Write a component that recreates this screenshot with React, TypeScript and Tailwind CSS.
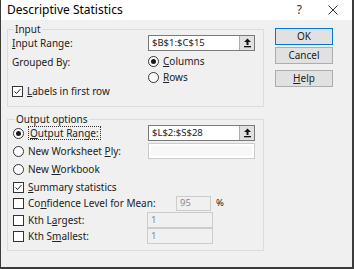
import React from "react";

const font = { fontFamily: '"Noto Sans", "Open Sans", sans-serif' };

function Radio({ checked }: { checked?: boolean }) {
  return (
    <span className="w-[11px] h-[11px] rounded-full border border-[#333333] bg-white flex items-center justify-center shrink-0">
      {checked && <span className="w-[5px] h-[5px] rounded-full bg-[#1a1a1a]" />}
    </span>
  );
}

function Check({ checked }: { checked?: boolean }) {
  return (
    <span className="w-[11px] h-[11px] border border-[#333333] bg-white flex items-center justify-center shrink-0">
      {checked && (
        <svg width="9" height="9" viewBox="0 0 9 9">
          <path d="M1.5 4.5 L3.5 6.5 L7.5 2" stroke="#222" strokeWidth="1" fill="none" />
        </svg>
      )}
    </span>
  );
}

function UpBtn() {
  return (
    <span className="w-[15px] h-full bg-[#e1e1e1] border-l border-[#adadad] flex items-center justify-center">
      <svg width="9" height="10" viewBox="0 0 9 10">
        <path d="M4.5 0.5 L8 4 L5.5 4 L5.5 7 L3.5 7 L3.5 4 L1 4 Z" fill="#111" />
        <rect x="1" y="8" width="7" height="1.3" fill="#111" />
      </svg>
    </span>
  );
}

function Btn({ children, primary }: { children: React.ReactNode; primary?: boolean }) {
  return (
    <div
      className={`w-[58px] h-[17px] bg-[#e1e1e1] border flex items-center justify-center text-[10px] text-[#222] ${
        primary ? "border-[#0078d7]" : "border-[#adadad]"
      }`}
    >
      {children}
    </div>
  );
}

export default function App() {
  return (
    <div
      className="w-[354px] h-[269px] bg-[#f0f0f0] border-l border-r-2 border-b-2 border-[#3c3c3c] flex flex-col text-[10px] text-[#222] overflow-hidden"
      style={font}
    >
      <div className="h-[20px] bg-white flex items-center shrink-0">
        <span className="pl-[6px] text-[12px] text-black leading-none">Descriptive Statistics</span>
        <span className="ml-auto text-[12px] leading-none mr-[26px] text-[#333]">?</span>
        <span className="mr-[14px] leading-none">
          <svg width="10" height="10" viewBox="0 0 10 10">
            <path d="M0.5 0.5 L9.5 9.5 M9.5 0.5 L0.5 9.5" stroke="#333" strokeWidth="1" />
          </svg>
        </span>
      </div>
      <div className="flex flex-1">
        <div className="ml-[6px] w-[257px] flex flex-col">
          <fieldset className="mt-[3px] border border-[#dcdcdc] pl-[4px] pr-[8px] pb-[8px] min-w-0">
            <legend className="leading-[12px] px-[1px] ml-[2px]">Input</legend>
            <div className="flex items-center h-[16px]">
              <span className="w-[136px]">
                <u>I</u>nput Range:
              </span>
              <div className="w-[107px] h-[16px] bg-white border border-[#7a7a7a] flex items-center">
                <span className="pl-[3px] flex-1 text-[9.5px]">$B$1:$C$15</span>
                <UpBtn />
              </div>
            </div>
            <div className="flex mt-[2px]">
              <span className="w-[136px] h-[16px] flex items-center mt-[1px]">Grouped By:</span>
              <div className="flex flex-col">
                <div className="h-[16px] flex items-center gap-[4px]">
                  <Radio checked />
                  <span>
                    <u>C</u>olumns
                  </span>
                </div>
                <div className="h-[16px] flex items-center gap-[4px]">
                  <Radio />
                  <span>
                    <u>R</u>ows
                  </span>
                </div>
              </div>
            </div>
            <div className="h-[13px] flex items-center gap-[4px]">
              <Check checked />
              <span>
                <u>L</u>abels in first row
              </span>
            </div>
          </fieldset>
          <fieldset className="mt-[6px] border border-[#dcdcdc] pl-[5px] pr-[8px] pb-[6px] min-w-0">
            <legend className="leading-[12px] px-[1px] ml-[2px]">Output options</legend>
            <div className="flex items-center h-[16px]">
              <div className="w-[135px] flex items-center gap-[4px]">
                <Radio checked />
                <span className="border border-dotted border-[#333] px-[1px] leading-[12px]">
                  <u>O</u>utput Range:
                </span>
              </div>
              <div className="w-[107px] h-[16px] bg-white border border-[#7a7a7a] flex items-center">
                <span className="pl-[3px] flex-1 text-[9.5px]">$L$2:$S$28</span>
                <UpBtn />
              </div>
            </div>
            <div className="flex items-center h-[16px] mt-[2px]">
              <div className="w-[135px] flex items-center gap-[4px]">
                <Radio />
                <span>
                  New Worksheet <u>P</u>ly:
                </span>
              </div>
              <div className="w-[107px] h-[16px] bg-white border border-[#cccccc] p-[2px]">
                <div className="w-full h-full bg-[#f7f7f7]" />
              </div>
            </div>
            <div className="flex items-center h-[16px] mt-[2px] gap-[4px]">
              <Radio />
              <span>
                New <u>W</u>orkbook
              </span>
            </div>
            <div className="flex items-center h-[16px] mt-[2px] gap-[4px]">
              <Check checked />
              <span>
                <u>S</u>ummary statistics
              </span>
            </div>
            <div className="flex items-center h-[16px]">
              <div className="w-[163px] flex items-center gap-[4px]">
                <Check />
                <span>
                  Co<u>n</u>fidence Level for Mean:
                </span>
              </div>
              <div className="w-[35px] h-[15px] border border-[#cccccc] bg-[#f0f0f0] flex items-center pl-[3px] text-[9.5px] text-[#8a8a8a]">
                95
              </div>
              <span className="ml-[5px] text-[9.5px]">%</span>
            </div>
            <div className="flex items-center h-[16px] mt-[1px]">
              <div className="w-[134px] flex items-center gap-[4px]">
                <Check />
                <span>
                  Kth L<u>a</u>rgest:
                </span>
              </div>
              <div className="w-[66px] h-[16px] border border-[#cccccc] bg-[#f0f0f0] flex items-center pl-[3px] text-[9.5px] text-[#8a8a8a]">
                1
              </div>
            </div>
            <div className="flex items-center h-[16px]">
              <div className="w-[134px] flex items-center gap-[4px]">
                <Check />
                <span>
                  Kth S<u>m</u>allest:
                </span>
              </div>
              <div className="w-[66px] h-[16px] border border-[#cccccc] bg-[#f0f0f0] flex items-center pl-[3px] text-[9.5px] text-[#8a8a8a]">
                1
              </div>
            </div>
          </fieldset>
        </div>
        <div className="ml-[11px] mt-[8px] flex flex-col">
          <Btn primary>OK</Btn>
          <div className="mt-[2px]">
            <Btn>Cancel</Btn>
          </div>
          <div className="mt-[6px]">
            <Btn>
              <span>
                <u>H</u>elp
              </span>
            </Btn>
          </div>
        </div>
      </div>
    </div>
  );
}
